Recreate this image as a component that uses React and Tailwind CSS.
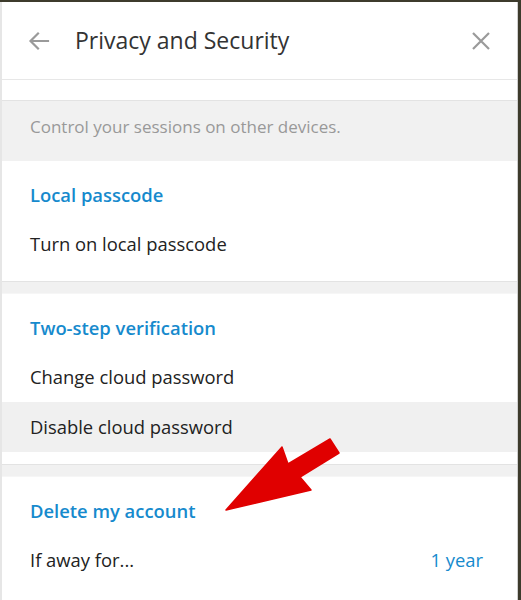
import React from "react";

// Privacy and Security settings panel (Telegram desktop style)
const font = { fontFamily: '"Open Sans", "Noto Sans", sans-serif' };

function Separator() {
  return (
    <div className="h-[13px] bg-[#f1f1f1] border-t border-[#e3e3e3] border-b border-b-[#f6f6f6]" />
  );
}

function Section({ title, rows, last }) {
  return (
    <section className={`bg-white pt-[22px] ${last ? "" : "pb-3"}`}>
      <h3 className="h-6 px-[28px] text-[18.4px] leading-6 font-semibold text-[#168acd]">
        {title}
      </h3>
      <div className="mt-3">
        {rows.map((row) => (
          <div
            key={row.label}
            className={`h-[50px] px-[28px] flex items-center justify-between text-[18.4px] text-[#222] ${
              row.hover ? "bg-[#f0f0f0]" : ""
            }`}
          >
            <span>{row.label}</span>
            {row.value && <span className="pr-[6px] text-[#168acd]">{row.value}</span>}
          </div>
        ))}
      </div>
    </section>
  );
}

export default function App() {
  return (
    <div className="relative w-[521px] h-[600px] overflow-hidden bg-[#3d3b2c]" style={font}>
      <div className="mt-[2px] mr-[3px] h-[598px] bg-white border-l-2 border-[#e6e6e6] border-r border-r-[#cfcfcf] flex flex-col">
        {/* Header */}
        <header className="h-[78px] shrink-0 flex items-center pl-[25px] pr-[26px] border-b border-[#e7e7e7]">
          <svg width="24" height="24" viewBox="0 0 24 24" fill="none" stroke="#9a9a9a" strokeWidth="2.2" strokeLinecap="square">
            <path d="M21 12H4M11 4.5L3.5 12 11 19.5" />
          </svg>
          <h1 className="ml-[24px] text-[23px] text-[#333] font-medium">Privacy and Security</h1>
          <svg className="ml-auto" width="20" height="20" viewBox="0 0 20 20" fill="none" stroke="#9a9a9a" strokeWidth="2.2">
            <path d="M2 2L18 18M18 2L2 18" />
          </svg>
        </header>

        <div className="h-[20px] bg-white" />

        {/* Sessions note */}
        <div className="h-[61px] bg-[#f1f1f1] border-t border-[#e3e3e3] px-[28px] pt-[13px] text-[17px] text-[#999]">
          Control your sessions on other devices.
        </div>

        <Section title="Local passcode" rows={[{ label: "Turn on local passcode" }]} />
        <Separator />
        <Section
          title="Two-step verification"
          rows={[
            { label: "Change cloud password" },
            { label: "Disable cloud password", hover: true },
          ]}
        />
        <Separator />
        <Section
          title="Delete my account"
          rows={[{ label: "If away for...", value: "1 year" }]}
          last
        />
      </div>

      {/* Red annotation arrow */}
      <svg className="absolute left-0 top-0 pointer-events-none" width="521" height="600">
        <polygon
          points="330,439 288,464 282,447 226,510 311,490 300,477 339,453"
          fill="#e00000"
          stroke="#e00000"
          strokeWidth="1.5"
          strokeLinejoin="round"
        />
      </svg>
    </div>
  );
}
